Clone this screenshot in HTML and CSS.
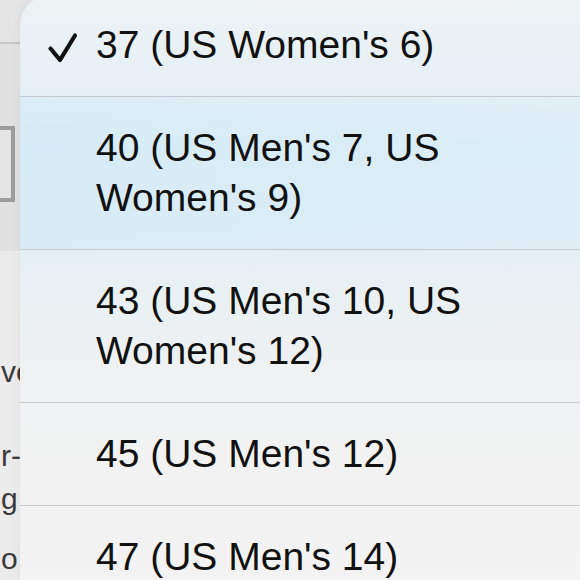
FILE: index.html
```html
<!DOCTYPE html>
<html lang="en">
<head>
<meta charset="utf-8">
<title>Size menu</title>
<link rel="stylesheet" href="styles.css">
</head>
<body>
<div class="page">
  <div class="topbar"></div>
  <div class="field-area"><div class="field"></div></div>
  <div class="body-text">
    <div class="line l1">ve</div>
    <div class="line l2">r-</div>
    <div class="line l3">g</div>
    <div class="line l4">o</div>
  </div>
</div>
<div class="menu" role="listbox">
  <div class="item" role="option" aria-selected="true">
    <span class="check"><svg width="34" height="33" viewBox="0 0 34 33"><path d="M4.5 17.5 L14 29 L29 4.5" fill="none" stroke="#111" stroke-width="4.2" stroke-linecap="round" stroke-linejoin="round"/></svg></span>
    <span class="label">37 (US Women's 6)</span>
  </div>
  <div class="item active" role="option">
    <span class="check"></span>
    <span class="label">40 (US Men's 7, US Women's 9)</span>
  </div>
  <div class="item" role="option">
    <span class="check"></span>
    <span class="label">43 (US Men's 10, US Women's 12)</span>
  </div>
  <div class="item" role="option">
    <span class="check"></span>
    <span class="label">45 (US Men's 12)</span>
  </div>
  <div class="item" role="option">
    <span class="check"></span>
    <span class="label">47 (US Men's 14)</span>
  </div>
</div>
</body>
</html>
```
FILE: styles.css
```css
html, body {
  margin: 0;
  padding: 0;
}
body {
  width: 580px;
  height: 580px;
  overflow: hidden;
  position: relative;
  font-family: "Liberation Sans", Arial, sans-serif;
  background: #ebebeb;
}
.page {
  width: 580px;
  height: 580px;
}
.topbar {
  height: 42px;
  background: #e4e4e4;
  border-bottom: 2px solid #c6c6c6;
}
.field-area {
  height: 125px;
  padding-top: 82px;
  background: #e1e1e1;
}
.field {
  width: 11px;
  height: 68px;
  border: 4px solid #9c9c9c;
  border-left: none;
  background: #e4e4e4;
}
.body-text {
  width: 19px;
  overflow: hidden;
  padding-left: 1px;
  font-size: 30px;
  line-height: 40px;
  color: #3a3a3a;
  white-space: nowrap;
}
.line.l1 { margin-top: 101px; }
.line.l2 { margin-top: 44px; }
.line.l3 { margin-top: 3px; }
.line.l4 { margin-top: 20px; }

.menu {
  position: absolute;
  left: 20px;
  top: -6px;
  width: 600px;
  border-top-left-radius: 32px;
  overflow: hidden;
  background: linear-gradient(to bottom,
    #eef2f4 0px,
    #e6f0f5 90px,
    #ddeef7 150px,
    #dfeef6 235px,
    #e9f0f3 290px,
    #eff1f2 380px,
    #f2f2f2 480px,
    #f3f3f3 100%);
  box-shadow: 0 0 10px rgba(0, 0, 0, 0.05);
}
.item {
  display: flex;
  padding: 26px 80px 26px 0;
  border-bottom: 1px solid #c6cacc;
}
.item.active {
  background: linear-gradient(to right, rgba(200, 230, 247, 0.35), rgba(215, 236, 247, 0.15));
}
.check {
  flex: 0 0 76px;
  height: 50px;
}
.check svg {
  display: block;
  margin: 11px 0 0 26px;
}
.label {
  font-size: 39px;
  line-height: 50px;
  color: #111;
  max-width: 444px;
}
```
